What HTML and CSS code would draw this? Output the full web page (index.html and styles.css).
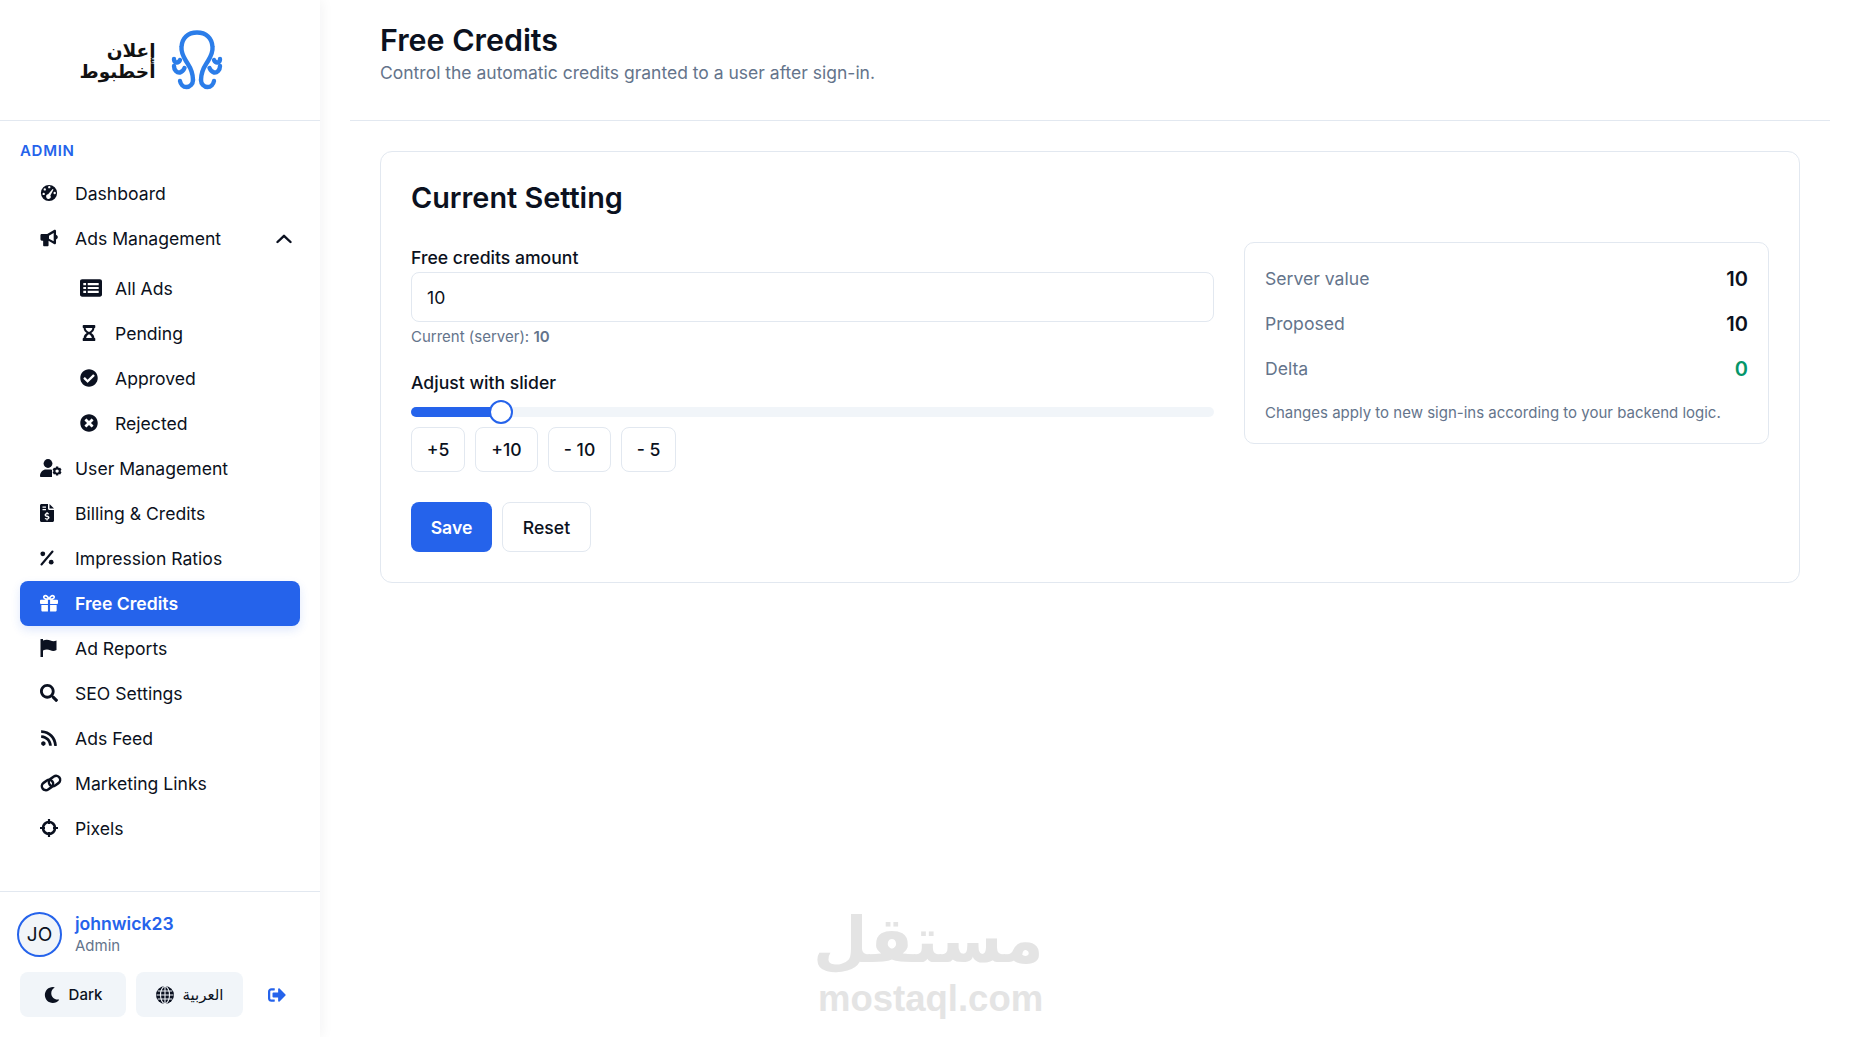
FILE: index.html
```html
<!DOCTYPE html>
<html lang="en">
<head>
    <meta charset="UTF-8">
    <meta name="viewport" content="width=device-width, initial-scale=1.0">
    <title>Free Credits</title>
    <link rel="stylesheet" href="styles.css">
</head>
<body>
    <div class="layout">
        <aside class="sidebar">
            <div class="brand">
                <div class="brand-text" dir="rtl">إعلان<br>أخطبوط</div>
                <svg class="brand-mark" viewBox="0 0 52 60" fill="none" stroke="#2b7de9" stroke-width="4.4" stroke-linecap="round" stroke-linejoin="round">
                    <path d="M22 50C22 40 18 36 15 31C12 26 10 22 10.500 17C11 8 17 2.500 26 2.500C35 2.500 41 8 41.500 17C42 22 40 26 37 31C34 36 30 40 30 50"/>
                    <path d="M22 50C22 54 19 57 15.500 57C12 57 9.500 54 9 51"/>
                    <path d="M30 50C30 54 33 57 36.500 57C40 57 42.500 54 43 51"/>
                    <path d="M3 36C3 40 6 43 9 42.500C11 42 12.500 40.500 13.500 38"/>
                    <path d="M49 36C49 40 46 43 43 42.500C41 42 39.500 40.500 38.500 38"/>
                    <path d="M3 29C3 33 7 34 9 30"/>
                    <path d="M49 29C49 33 45 34 43 30"/>
                </svg>
            </div>

            <nav class="nav">
                <div class="nav-title">ADMIN</div>
                <a class="nav-item">
                    <svg class="icon" viewBox="0 0 20 20"><path fill-rule="evenodd" d="M10 1a9 9 0 1 1 0 18a9 9 0 0 1 0-18zM9 3.500a1.300 1.300 0 1 0 2.600 0a1.300 1.300 0 0 0-2.600 0zM4 6a1.300 1.300 0 1 0 2.600 0a1.300 1.300 0 0 0-2.600 0zM2.800 11a1.300 1.300 0 1 0 2.600 0a1.300 1.300 0 0 0-2.600 0zM14 5.500l-5 6a2.500 2.500 0 1 0 2.500 1.200l3.500-6.500zM15 10a1.300 1.300 0 1 0 2.600 0a1.300 1.300 0 0 0-2.600 0z"/></svg>
                    <span>Dashboard</span>
                </a>
                <a class="nav-item">
                    <svg class="icon" viewBox="0 0 20 20"><path d="M.5 7C.5 6 1.200 5.500 2 5.500H8L15.500 1C16.500 .5 17.800 1 17.800 2.300V6.300C19 6.800 19.800 8 19.800 9S19 11.200 17.800 11.700V15.500C17.800 16.800 16.500 17.300 15.500 16.800L9.500 13V18C9.500 18.800 9 19.300 8.300 19.300H4.700C4 19.300 3.500 18.800 3.500 18V13H2C1.200 13 .5 12.500 .5 11.500zM10 7.500V10.800L15.200 13.700V4.500z" fill-rule="evenodd"/></svg>
                    <span>Ads Management</span>
                    <svg class="chevron" viewBox="0 0 16 10" fill="none" stroke="#0b1120" stroke-width="2.400" stroke-linecap="round" stroke-linejoin="round"><path d="M1.500 8L8 1.800L14.500 8"/></svg>
                </a>
                <div class="sub-nav">
                    <a class="nav-item sub">
                        <svg class="icon wide" viewBox="0 0 20 16"><path fill-rule="evenodd" d="M2 0H18C19.200 0 20 .8 20 2V14C20 15.200 19.200 16 18 16H2C.8 16 0 15.200 0 14V2C0 .8.8 0 2 0zM3 3.500V5.500H5.500V3.500zM7 3.500V5.500H17V3.500zM3 7V9H5.500V7zM7 7V9H17V7zM3 10.500V12.500H5.500V10.500zM7 10.500V12.500H17V10.500z"/></svg>
                        <span>All Ads</span>
                    </a>
                    <a class="nav-item sub">
                        <svg class="icon" viewBox="2 0 16 20"><path fill-rule="evenodd" d="M4 1H16C16.600 1 17 1.400 17 2V3.500C17 4 16.600 4.500 16 4.500C16 7 14.500 8.800 12.500 10C14.500 11.200 16 13 16 15.500C16.600 15.500 17 16 17 16.500V18C17 18.600 16.600 19 16 19H4C3.400 19 3 18.600 3 18V16.500C3 16 3.400 15.500 4 15.500C4 13 5.500 11.200 7.500 10C5.500 8.800 4 7 4 4.500C3.400 4.500 3 4 3 3.500V2C3 1.400 3.400 1 4 1zM6.300 4.500C6.300 6.300 7.700 8 10 9C12.300 8 13.700 6.300 13.700 4.500zM6.800 15.500H13.200C12.800 13.800 11.500 12.200 10 11.500C8.500 12.200 7.200 13.800 6.800 15.500z"/></svg>
                        <span>Pending</span>
                    </a>
                    <a class="nav-item sub">
                        <svg class="icon" viewBox="0 0 512 512"><path d="M504 256c0 136.967-111.033 248-248 248S8 392.967 8 256 119.033 8 256 8s248 111.033 248 248zM227.314 387.314l184-184c6.248-6.248 6.248-16.379 0-22.627l-22.627-22.627c-6.248-6.249-16.379-6.249-22.628 0L216 308.118l-70.059-70.059c-6.248-6.248-16.379-6.248-22.628 0l-22.627 22.627c-6.248 6.248-6.248 16.379 0 22.627l104 104c6.249 6.249 16.379 6.249 22.628.001z"/></svg>
                        <span>Approved</span>
                    </a>
                    <a class="nav-item sub">
                        <svg class="icon" viewBox="0 0 512 512"><path d="M256 8C119 8 8 119 8 256s111 248 248 248 248-111 248-248S393 8 256 8zm121.600 313.100c4.700 4.700 4.700 12.300 0 17L338 377.600c-4.700 4.700-12.300 4.700-17 0L256 312l-65.100 65.600c-4.700 4.700-12.300 4.700-17 0L134.400 338c-4.700-4.700-4.700-12.300 0-17l65.600-65-65.600-65.100c-4.700-4.700-4.700-12.300 0-17l39.600-39.600c4.700-4.700 12.300-4.700 17 0l65 65.700 65.100-65.600c4.700-4.700 12.300-4.700 17 0l39.600 39.600c4.700 4.700 4.700 12.300 0 17L312 256l65.600 65.100z"/></svg>
                        <span>Rejected</span>
                    </a>
                </div>
                <a class="nav-item">
                    <svg class="icon wide" viewBox="0 0 22 18"><circle cx="8" cy="4.500" r="4.400"/><path d="M1 18C0.400 18 0 17.500 0 17C0 13 3 10.500 6 10.500H10C11 10.500 11.700 10.700 12 10.900V18z"/><path fill-rule="evenodd" d="M16 7.500H18.200L18.600 9L20.200 8.700L21.500 10.800L20.400 12L21.500 13.300L20.200 15.400L18.600 15.100L18.200 16.600H16L15.500 15.100L13.900 15.400L12.600 13.300L13.700 12L12.600 10.800L13.900 8.700L15.500 9zM17.100 10.400a1.700 1.700 0 1 0 0 3.400a1.700 1.700 0 0 0 0-3.400z"/></svg>
                    <span>User Management</span>
                </a>
                <a class="nav-item">
                    <svg class="icon narrow" viewBox="0 0 14 18"><path fill-rule="evenodd" d="M1.500 0H8V4.500C8 5.300 8.700 6 9.500 6H14V16.500C14 17.300 13.300 18 12.500 18H1.500C.7 18 0 17.300 0 16.500V1.500C0 .7.7 0 1.500 0zM9.500 0L14 4.500H9.500zM2.500 2.500V3.700H6V2.500zM2.500 5V6.200H6V5zM6.500 8V9C5.400 9.200 4.600 10 4.600 11C4.600 12.200 5.600 12.700 6.800 13C7.600 13.200 8 13.400 8 13.800C8 14.200 7.600 14.400 7 14.400C6.400 14.400 5.700 14.200 5.200 13.900L4.600 15C5.100 15.300 5.800 15.500 6.500 15.600V16.500H7.600V15.600C8.700 15.400 9.500 14.600 9.500 13.600C9.500 12.400 8.500 11.900 7.300 11.600C6.500 11.400 6.100 11.200 6.100 10.900C6.100 10.500 6.500 10.200 7 10.200C7.500 10.200 8.100 10.400 8.600 10.600L9.100 9.500C8.700 9.300 8.200 9.100 7.600 9V8z"/></svg>
                    <span>Billing &amp; Credits</span>
                </a>
                <a class="nav-item">
                    <svg class="icon narrow" viewBox="0 0 14 14"><circle cx="2.800" cy="2.800" r="2.400"/><circle cx="11.200" cy="11.200" r="2.400"/><path d="M12.500 .5L1.500 13.500" stroke="#0b1120" stroke-width="2.100" stroke-linecap="round"/></svg>
                    <span>Impression Ratios</span>
                </a>
                <a class="nav-item active">
                    <svg class="icon" viewBox="0 0 20 20"><path fill-rule="evenodd" d="M1 6.500H6.200C4.600 6 3.300 5 3.300 3.400C3.300 1.800 4.500 .8 6 .8C7.900 .8 9.200 2.500 10 4C10.800 2.500 12.100 .8 14 .8C15.500 .8 16.700 1.800 16.700 3.400C16.700 5 15.400 6 13.800 6.500H19C19.600 6.500 20 6.900 20 7.500V10C20 10.600 19.600 11 19 11H11.200V6.500H8.800V11H1C.4 11 0 10.600 0 10V7.500C0 6.900.4 6.500 1 6.500zM6 2.700C5.500 2.700 5.100 3 5.100 3.500C5.100 4.300 6.400 4.700 8.300 4.700C7.700 3.600 7 2.700 6 2.700zM14 2.700C13 2.700 12.300 3.600 11.700 4.700C13.600 4.700 14.900 4.300 14.900 3.500C14.900 3 14.500 2.700 14 2.700z"/><path d="M1.500 12.300H8.800V19.500H3C2.100 19.500 1.500 18.900 1.500 18zM11.200 12.300H18.500V18C18.500 18.900 17.900 19.500 17 19.500H11.200z"/></svg>
                    <span>Free Credits</span>
                </a>
                <a class="nav-item">
                    <svg class="icon" viewBox="0 0 18 18"><path d="M.5 0H3V18H.5z"/><path d="M3 1.500C6 .2 8.500 .6 10.500 1.600C12.500 2.600 14.500 2.600 16.500 1.600V11C14.500 12.300 12.300 12.300 10.300 11.300C8 10.200 5.500 10.300 3 11.500z"/></svg>
                    <span>Ad Reports</span>
                </a>
                <a class="nav-item">
                    <svg class="icon" viewBox="0 0 512 512"><path d="M505 442.700L405.300 343c-4.500-4.500-10.600-7-17-7H372c27.600-35.300 44-79.700 44-128C416 93.100 322.900 0 208 0S0 93.100 0 208s93.100 208 208 208c48.300 0 92.700-16.400 128-44v16.300c0 6.400 2.500 12.500 7 17l99.700 99.700c9.400 9.400 24.600 9.400 33.900 0l28.300-28.300c9.400-9.400 9.400-24.600.1-34zM208 336c-70.700 0-128-57.200-128-128 0-70.700 57.200-128 128-128 70.700 0 128 57.200 128 128 0 70.700-57.200 128-128 128z"/></svg>
                    <span>SEO Settings</span>
                </a>
                <a class="nav-item">
                    <svg class="icon" viewBox="0 0 448 512"><path d="M128.081 415.959c0 35.369-28.672 64.041-64.041 64.041S0 451.328 0 415.959s28.672-64.041 64.040-64.041 64.041 28.673 64.041 64.041zm175.660 47.250c-8.354-154.600-132.185-278.587-286.950-286.950C7.656 175.765 0 183.105 0 192.253v48.069c0 8.415 6.490 15.472 14.887 16.018 111.832 7.284 201.473 96.702 208.772 208.772.547 8.397 7.604 14.887 16.018 14.887h48.069c9.149.001 16.489-7.655 15.995-16.790zm144.249.288C439.596 229.677 251.465 40.445 16.503 32.010 7.473 31.686 0 38.981 0 48.016v48.068c0 8.625 6.835 15.645 15.453 15.999 191.179 7.839 344.627 161.316 352.465 352.465.353 8.618 7.373 15.453 15.999 15.453h48.068c9.034-.001 16.329-7.474 16.005-16.504z"/></svg>
                    <span>Ads Feed</span>
                </a>
                <a class="nav-item">
                    <svg class="icon wide" viewBox="0 0 22 17" fill="none" stroke="#0b1120" stroke-width="2.500"><rect x="1.500" y="6.500" width="12" height="8" rx="4" transform="rotate(-35 7.500 10.500)"/><rect x="8.500" y="2.500" width="12" height="8" rx="4" transform="rotate(-35 14.500 6.500)"/></svg>
                    <span>Marketing Links</span>
                </a>
                <a class="nav-item">
                    <svg class="icon" viewBox="0 0 18 18" fill="none" stroke="#0b1120" stroke-width="2.600"><circle cx="9" cy="9" r="6"/><path d="M9 0V5M9 13V18M0 9H5M13 9H18" stroke-width="2.200"/></svg>
                    <span>Pixels</span>
                </a>
            </nav>

            <div class="side-footer">
                <div class="user">
                    <div class="avatar">JO</div>
                    <div class="user-info">
                        <div class="user-name">johnwick23</div>
                        <div class="user-role">Admin</div>
                    </div>
                </div>
                <div class="side-actions">
                    <button class="pill dark-btn">
                        <svg class="pill-icon moon" viewBox="0 0 512 512"><path d="M283.211 512c78.962 0 151.079-35.925 198.857-94.792 7.068-8.708-.639-21.430-11.562-19.350-124.203 23.654-238.262-71.576-238.262-196.954 0-72.222 38.662-138.635 101.498-174.394 9.686-5.512 7.250-20.197-3.756-22.230A258.156 258.156 0 0 0 283.211 0c-141.309 0-256 114.511-256 256 0 141.309 114.511 256 256 256z"/></svg>
                        Dark
                    </button>
                    <button class="pill lang-btn">
                        <svg class="pill-icon" viewBox="0 0 18 18"><circle cx="9" cy="9" r="9"/><path d="M9 .5V17.500M.5 9H17.500M1.800 5H16.200M1.800 13H16.200" stroke="#f1f5f9" stroke-width="1.100"/><ellipse cx="9" cy="9" rx="4.500" ry="8.500" fill="none" stroke="#f1f5f9" stroke-width="1.100"/></svg>
                        <span>العربية</span>
                    </button>
                    <svg class="logout" viewBox="0 0 512 512"><path d="M497 273L329 441c-15 15-41 4.500-41-17v-96H152c-13.300 0-24-10.700-24-24v-96c0-13.300 10.700-24 24-24h136V88c0-21.400 25.900-32 41-17l168 168c9.300 9.400 9.300 24.600 0 34zM192 436v-40c0-6.600-5.400-12-12-12H96c-17.700 0-32-14.300-32-32V160c0-17.700 14.300-32 32-32h84c6.600 0 12-5.400 12-12V76c0-6.600-5.400-12-12-12H96c-53 0-96 43-96 96v192c0 53 43 96 96 96h84c6.600 0 12-5.400 12-12z"/></svg>
                </div>
            </div>
        </aside>

        <main class="main">
            <header class="page-header">
                <h1>Free Credits</h1>
                <p>Control the automatic credits granted to a user after sign-in.</p>
            </header>

            <section class="card">
                <h2>Current Setting</h2>
                <div class="card-grid">
                    <div class="form-col">
                        <label class="field-label" for="amount">Free credits amount</label>
                        <input class="text-input" type="text" id="amount" value="10">
                        <div class="help">Current (server): <b>10</b></div>

                        <label class="field-label slider-label" for="slider">Adjust with slider</label>
                        <input class="slider" type="range" id="slider" min="0" max="100" value="10">
                        <div class="quick-btns">
                            <button class="btn-outline small w-54">+5</button>
                            <button class="btn-outline small w-63">+10</button>
                            <button class="btn-outline small w-63">- 10</button>
                            <button class="btn-outline small w-55">- 5</button>
                        </div>

                        <div class="form-actions">
                            <button class="btn-primary">Save</button>
                            <button class="btn-outline">Reset</button>
                        </div>
                    </div>

                    <div class="summary">
                        <div class="summary-row"><span>Server value</span><strong>10</strong></div>
                        <div class="summary-row"><span>Proposed</span><strong>10</strong></div>
                        <div class="summary-row"><span>Delta</span><strong class="delta">0</strong></div>
                        <div class="summary-note">Changes apply to new sign-ins according to your backend logic.</div>
                    </div>
                </div>
            </section>
        </main>
    </div>

    <div class="watermark">
        <div class="wm-ar">مستقل</div>
        <div class="wm-en">mostaql.com</div>
    </div>
</body>
</html>
```

FILE: styles.css
```css
* {
    box-sizing: border-box;
}

html, body {
    height: 100%;
}

body {
    margin: 0;
    font-family: Inter, "DejaVu Sans", sans-serif;
    font-size: 17.600px;
    color: #0b1120;
    background-color: #fff;
    overflow: hidden;
}

button {
    font-family: inherit;
    cursor: pointer;
}

.layout {
    display: flex;
    height: 1037px;
}

/* sidebar */
.sidebar {
    width: 320px;
    flex-shrink: 0;
    display: flex;
    flex-direction: column;
    background-color: #fff;
    box-shadow: 2px 0 12px rgba(15, 23, 42, 0.05);
}

.brand {
    height: 121px;
    flex-shrink: 0;
    display: flex;
    align-items: flex-start;
    justify-content: center;
    gap: 15px;
    padding-top: 30px;
    padding-right: 18px;
    border-bottom: 1px solid #e2e8f0;
}

.brand-text {
    font-family: "DejaVu Sans", sans-serif;
    font-weight: 700;
    font-size: 18.500px;
    line-height: 21px;
    margin-top: 10px;
    color: #111;
}

.brand-mark {
    width: 52px;
    height: 60px;
}

.nav {
    flex: 1;
    padding: 20px 20px 0;
}

.nav-title {
    font-size: 15px;
    font-weight: 600;
    letter-spacing: 0.7px;
    color: #2563eb;
    line-height: 20px;
    margin-bottom: 10px;
}

.nav-item {
    display: flex;
    align-items: center;
    height: 45px;
    padding-left: 20px;
    border-radius: 8px;
    line-height: 24px;
    color: #0b1120;
}

.nav-item .icon {
    width: 18px;
    height: 18px;
    margin-right: 17px;
    margin-bottom: 2px;
    fill: #0b1120;
    flex-shrink: 0;
}

.nav-item .icon.wide {
    width: 22px;
    margin-right: 13px;
}

.nav-item .icon.narrow {
    width: 14px;
    margin-right: 21px;
}

.nav-item .icon[fill="none"] {
    fill: none;
}

.chevron {
    width: 16px;
    height: 10px;
    margin-left: auto;
    margin-right: 8px;
}

.sub-nav {
    padding: 5px 0 0 40px;
}

.nav-item.active {
    background-color: #2563eb;
    color: #fff;
    font-weight: 600;
    box-shadow: 0 4px 10px rgba(37, 99, 235, 0.15);
}

.nav-item.active .icon {
    fill: #fff;
}

.side-footer {
    border-top: 1px solid #e2e8f0;
    height: 146px;
    padding: 20px 20px 0;
}

.user {
    display: flex;
    align-items: center;
    gap: 13px;
    margin-left: -3px;
}

.user-info {
    padding-top: 1px;
}

.avatar {
    width: 45px;
    height: 45px;
    border-radius: 50%;
    border: 2px solid #2563eb;
    background-color: #f1f5f9;
    display: flex;
    align-items: center;
    justify-content: center;
    font-size: 19px;
}

.user-name {
    font-size: 17.600px;
    font-weight: 600;
    color: #2563eb;
    line-height: 22px;
}

.user-role {
    font-size: 15px;
    color: #64748b;
    line-height: 22px;
}

.side-actions {
    display: flex;
    align-items: center;
    gap: 10px;
    margin-top: 15px;
}

.pill {
    height: 45px;
    border: none;
    border-radius: 8px;
    background-color: #f1f5f9;
    color: #0b1120;
    font-size: 15px;
    font-weight: 500;
    display: flex;
    align-items: center;
    justify-content: center;
    gap: 9px;
}

.dark-btn {
    width: 106px;
}

.lang-btn {
    width: 107px;
}

.lang-btn span {
    font-family: "DejaVu Sans", sans-serif;
    font-weight: 400;
    font-size: 15px;
}

.pill-icon {
    width: 18px;
    height: 18px;
    fill: #0b1120;
}

.pill-icon.moon {
    width: 16px;
    height: 16px;
}

.logout {
    width: 18px;
    height: 18px;
    margin-left: 15px;
    fill: #2563eb;
}

/* main */
.main {
    flex: 1;
    padding: 0 30px;
    min-width: 0;
}

.page-header {
    height: 121px;
    padding-left: 30px;
    padding-top: 20px;
    border-bottom: 1px solid #e2e8f0;
}

.page-header h1 {
    margin: 0;
    font-size: 30.400px;
    font-weight: 600;
    line-height: 40px;
}

.page-header p {
    margin: 1px 0 0;
    font-size: 17.500px;
    color: #64748b;
    line-height: 24px;
}

.card {
    margin: 30px 0 0 30px;
    width: 1420px;
    height: 432px;
    padding: 30px;
    border: 1px solid #e2e8f0;
    border-radius: 12px;
    background-color: #fff;
}

.card h2 {
    margin: 0;
    padding-top: 1px;
    font-size: 28.800px;
    font-weight: 600;
    line-height: 30px;
}

.card-grid {
    display: grid;
    grid-template-columns: 803px 525px;
    gap: 30px;
    margin-top: 29px;
    align-items: start;
}

.field-label {
    display: block;
    font-weight: 500;
    line-height: 24px;
    margin-top: 4px;
    margin-bottom: 2px;
}

.text-input {
    display: block;
    width: 100%;
    height: 50px;
    padding: 0 15px;
    font-family: inherit;
    font-size: 17.600px;
    color: #0b1120;
    border: 1px solid #e2e8f0;
    border-radius: 8px;
    outline: none;
}

.help {
    font-size: 15px;
    color: #64748b;
    line-height: 20px;
    margin-top: 5px;
}

.help b {
    font-weight: 600;
}

.slider-label {
    margin-top: 24px;
    margin-bottom: 12px;
}

.slider {
    -webkit-appearance: none;
    appearance: none;
    display: block;
    width: 100%;
    height: 10px;
    margin: 0;
    border-radius: 5px;
    background: linear-gradient(to right, #2563eb 11.200%, #f1f5f9 11.200%);
    outline: none;
}

.slider::-webkit-slider-thumb {
    -webkit-appearance: none;
    width: 24px;
    height: 24px;
    border-radius: 50%;
    background-color: #fff;
    border: 2px solid #2563eb;
}

.quick-btns {
    display: flex;
    gap: 10px;
    margin-top: 10px;
}

.btn-outline {
    height: 50px;
    width: 89px;
    background-color: #fff;
    border: 1px solid #e2e8f0;
    border-radius: 8px;
    color: #0b1120;
    font-size: 17.600px;
    font-weight: 500;
}

.btn-outline.small {
    height: 45px;
    padding: 0;
}

.w-54 { width: 54px; }
.w-55 { width: 55px; }
.w-63 { width: 63px; }

.btn-primary {
    height: 50px;
    width: 81px;
    background-color: #2563eb;
    border: none;
    border-radius: 8px;
    color: #fff;
    font-size: 17.600px;
    font-weight: 600;
}

.form-actions {
    display: flex;
    gap: 10px;
    margin-top: 30px;
}

.summary {
    border: 1px solid #e2e8f0;
    border-radius: 10px;
    padding: 13px 20px 0;
    height: 202px;
}

.summary-row {
    display: flex;
    align-items: center;
    justify-content: space-between;
    height: 45px;
    color: #64748b;
}

.summary-row strong {
    color: #0b1120;
    font-size: 20px;
    font-weight: 600;
}

.summary-row .delta {
    color: #059669;
}

.summary-note {
    font-size: 15px;
    color: #64748b;
    line-height: 20px;
    margin-top: 12px;
}

/* watermark */
.watermark {
    position: absolute;
    left: 818px;
    top: 906px;
    width: 222px;
    text-align: center;
    color: #e4e4e4;
    font-weight: 700;
    pointer-events: none;
}

.wm-ar {
    font-family: "DejaVu Sans", sans-serif;
    font-size: 63px;
    line-height: 70px;
    margin-left: -5px;
}

.wm-en {
    font-family: "Liberation Sans", sans-serif;
    font-size: 36.500px;
    line-height: 34px;
    margin-top: 6px;
}
```
